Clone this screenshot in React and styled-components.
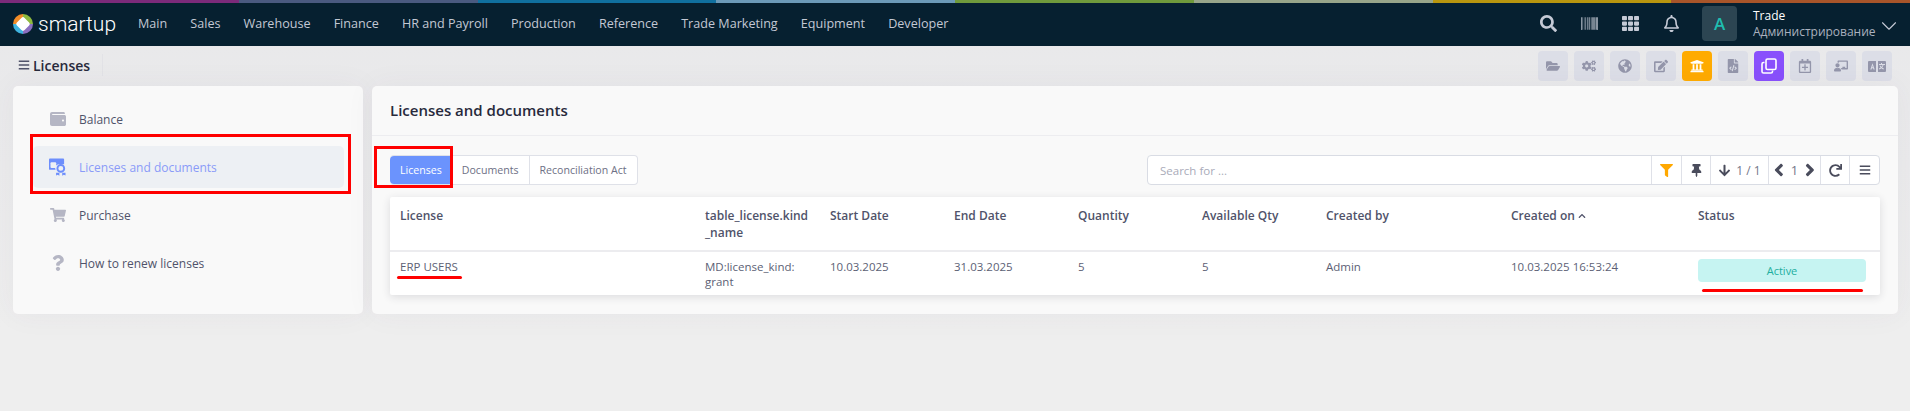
import React from 'react';
import styled, { createGlobalStyle } from 'styled-components';
import {
  FaSearch, FaBarcode, FaTh, FaRegBell, FaFolderOpen, FaCogs, FaGlobeAmericas, FaEdit,
  FaUniversity, FaFileCode, FaRegCalendarPlus, FaChalkboardTeacher,
  FaWallet, FaShoppingCart, FaQuestion, FaFilter, FaThumbtack, FaArrowDown, FaRedo, FaBars,
  FaAngleLeft, FaAngleRight, FaChevronUp,
} from 'react-icons/fa';
import { FiChevronDown } from 'react-icons/fi';

const GlobalStyle = createGlobalStyle`
  html, body { margin: 0; padding: 0; }
  body {
    width: 1910px;
    height: 411px;
    overflow: hidden;
    background: linear-gradient(#e8e8ea, #eeeeee 80%);
    font-family: "Open Sans", "Liberation Sans", sans-serif;
    color: #3f4254;
  }
`;

const Page = styled.div`
  position: relative;
  width: 1910px;
  height: 411px;
`;

const Strip = styled.div`
  display: flex;
  height: 3px;
`;

const StripPart = styled.div`
  flex: 1;
  background: ${({ $color }) => $color};
`;

const TopBar = styled.header`
  display: flex;
  align-items: center;
  box-sizing: border-box;
  height: 43px;
  background: #062030;
  padding: 0 0 2px 13px;
`;

const Logo = styled.div`
  display: flex;
  align-items: center;
  gap: 5px;
  width: 125px;
  color: #fff;
  font-family: Roboto, "Open Sans", sans-serif;
  font-size: 21px;
  font-weight: 300;
`;

const Nav = styled.nav`
  display: flex;
  gap: 23.1px;
  flex: 1;
`;

const NavItem = styled.span`
  font-size: 12.6px;
  color: #c3c8d4;
  white-space: nowrap;
`;

const TopIcons = styled.div`
  display: flex;
  align-items: center;
  color: #c5cad6;
`;

const TopIcon = styled.span`
  display: flex;
  justify-content: center;
  width: 41px;
  font-size: 17px;
`;

const Avatar = styled.div`
  display: flex;
  align-items: center;
  justify-content: center;
  width: 35px;
  height: 35px;
  margin: 0 16px 0 10px;
  border-radius: 4px;
  background: #2c4552;
  color: #1fbdb0;
  font-size: 17px;
  font-weight: 600;
`;

const UserBox = styled.div`
  position: relative;
  width: 157px;
  font-size: 12px;
  line-height: 16px;
`;

const UserName = styled.div`
  color: #fff;
  font-weight: 500;
`;

const UserRole = styled.div`
  color: #aab1bf;
`;

const UserChevron = styled(FiChevronDown)`
  position: absolute;
  right: 8px;
  top: 5px;
  width: 26px;
  height: 26px;
  stroke-width: 1;
  color: #c5cad6;
`;

const SubHeader = styled.div`
  display: flex;
  align-items: center;
  height: 40px;
  padding-left: 18px;
`;

const PageTitle = styled.h1`
  display: flex;
  align-items: center;
  gap: 3px;
  width: 84px;
  height: 22px;
  margin: -2px 0 0;
  font-size: 14px;
  font-weight: 600;
  color: #282a3c;
  border-right: 1px solid #e2e2e6;
`;

const Actions = styled.div`
  display: flex;
  gap: 6px;
  margin-left: auto;
  margin-right: 18px;
`;

const ActionButton = styled.span`
  display: flex;
  align-items: center;
  justify-content: center;
  width: 30px;
  height: 30px;
  border-radius: 4px;
  font-size: 14px;
  background: ${({ $bg }) => $bg || '#dcdee7'};
  color: ${({ $bg }) => ($bg ? '#fff' : '#9496ab')};
`;

const Content = styled.main`
  display: grid;
  grid-template-columns: 350px 1526px;
  gap: 9px;
  padding: 0 12px 0 13px;
`;

const Card = styled.section`
  height: 228px;
  background: #f9f9f9;
  border-radius: 5px;
  box-shadow: 0 0 30px rgba(82, 63, 105, 0.05);
`;

const SideList = styled.div`
  display: flex;
  flex-direction: column;
  padding: 12px 19px 0 20px;
`;

const SideItem = styled.div`
  display: flex;
  align-items: center;
  gap: 13px;
  height: 42px;
  margin-bottom: 6px;
  padding-left: 16px;
  border-radius: 5px;
  font-size: 12px;
  background: ${({ $active }) => ($active ? '#edf0f4' : 'transparent')};
  color: ${({ $active }) => ($active ? '#8a9bf8' : '#50536a')};
`;

const SideIcon = styled.span`
  display: flex;
  justify-content: center;
  width: 17px;
  font-size: 16px;
  color: ${({ $active }) => ($active ? '#6d8efc' : '#b5b6c4')};
`;

const CardHead = styled.div`
  display: flex;
  align-items: center;
  box-sizing: border-box;
  height: 50px;
  padding: 0 0 2px 18px;
  border-bottom: 1px solid #ededf0;
`;

const CardTitle = styled.h2`
  margin: 0;
  font-size: 15px;
  font-weight: 600;
  color: #282a3c;
`;

const CardBody = styled.div`
  padding: 19px 18px 0;
`;

const Controls = styled.div`
  display: flex;
  align-items: stretch;
  justify-content: space-between;
  height: 30px;
  margin-bottom: 12px;
`;

const Tabs = styled.div`
  display: flex;
  background: #fff;
  border: 1px solid #dfe1e8;
  border-left: 0;
  border-radius: 4px;
`;

const Tab = styled.span`
  display: flex;
  align-items: center;
  padding: 0 10px;
  font-size: 10.6px;
  color: ${({ $active }) => ($active ? '#fff' : '#6e7085')};
  background: ${({ $active }) => ($active ? '#6b93fd' : 'transparent')};
  border-radius: ${({ $active }) => ($active ? '4px 0 0 4px' : '0')};
  border-left: ${({ $divider }) => ($divider ? '1px solid #dfe1e8' : '0')};
`;

const SearchBar = styled.div`
  display: flex;
  box-sizing: border-box;
  width: 733px;
  background: #fff;
  border: 1px solid #d9dce4;
  border-radius: 4px;
`;

const SearchText = styled.div`
  flex: 1;
  display: flex;
  align-items: center;
  padding-left: 12px;
  font-size: 11.5px;
  color: #a9abb9;
`;

const ToolCell = styled.span`
  display: flex;
  align-items: center;
  justify-content: center;
  box-sizing: border-box;
  gap: ${({ $gap }) => $gap || 0}px;
  width: ${({ $w }) => $w}px;
  border-left: 1px solid #dfe1e8;
  font-size: ${({ $size }) => $size || 13}px;
  white-space: nowrap;
  color: ${({ $color }) => $color || '#4a4c5c'};
`;

const Muted = styled.span`
  color: #75778a;
  font-size: ${({ $size }) => $size || 12}px;
`;

const Table = styled.div`
  background: #fff;
  box-shadow: 0 2px 8px rgba(40, 42, 60, 0.14);
  border-radius: 2px;
`;

const Row = styled.div`
  display: grid;
  grid-template-columns: 305px 125px 124px 124px 124px 124px 185px 187px 182px;
  box-sizing: border-box;
  padding: ${({ $head }) => ($head ? '10px' : '7px')} 0 0 10px;
  height: ${({ $head }) => ($head ? '55px' : '43px')};
  border-bottom: ${({ $head }) => ($head ? '2px solid #ececef' : '0')};
`;

const HeadCell = styled.div`
  font-size: 12px;
  font-weight: 600;
  line-height: 17px;
  color: #50536a;
  padding-right: 12px;
  overflow-wrap: anywhere;
`;

const Cell = styled.div`
  font-size: 11.5px;
  line-height: 15px;
  color: #5c5f75;
`;

const SortMark = styled(FaChevronUp)`
  width: 8px;
  height: 8px;
  margin-left: 3px;
  vertical-align: 0;
`;

const StatusPill = styled.div`
  display: flex;
  align-items: center;
  justify-content: center;
  width: 168px;
  height: 23px;
  border-radius: 4px;
  background: #c6f4f2;
  color: #22ae9f;
  font-size: 11px;
`;

const RedBox = styled.div`
  position: absolute;
  left: ${({ $x }) => $x}px;
  top: ${({ $y }) => $y}px;
  width: ${({ $w }) => $w}px;
  height: ${({ $h }) => $h}px;
  box-sizing: border-box;
  border: 3px solid #f00;
  pointer-events: none;
`;

const RedLine = styled.div`
  position: absolute;
  left: ${({ $x }) => $x}px;
  top: ${({ $y }) => $y}px;
  width: ${({ $w }) => $w}px;
  height: 3px;
  border-radius: 1.5px;
  background: #f00;
`;

const stripColors = ['#7c2a7a', '#4a5a80', '#10709f', '#6c9ab8', '#6f9a3c', '#97a58a', '#b8960f', '#a8552a'];
const navItems = ['Main', 'Sales', 'Warehouse', 'Finance', 'HR and Payroll', 'Production', 'Reference', 'Trade Marketing', 'Equipment', 'Developer'];
const columns = ['License', 'table_license.kind _name', 'Start Date', 'End Date', 'Quantity', 'Available Qty', 'Created by', 'Created on', 'Status'];

function CopyIcon() {
  return (
    <svg width="16" height="16" viewBox="0 0 16 16" fill="none" stroke="currentColor" strokeWidth="1.6">
      <rect x="5" y="1" width="10" height="10.5" rx="1.5" />
      <path d="M3.5 4.5H2.5A1.5 1.5 0 0 0 1 6v7.5A1.5 1.5 0 0 0 2.5 15H10a1.5 1.5 0 0 0 1.5-1.5v-1" />
    </svg>
  );
}

function TranslateIcon() {
  return (
    <svg width="18" height="11" viewBox="0 0 18 11" fill="currentColor">
      <path fillRule="evenodd" d="M1 0h7v11H1a1 1 0 0 1-1-1V1a1 1 0 0 1 1-1zm3.5 2.2L2.3 8.5h1.2l.4-1.2h1.2l.4 1.2h1.2L4.5 2.2zm0 2.4l.35 1.6h-.7z" />
      <path fillRule="evenodd" d="M10 0h7a1 1 0 0 1 1 1v9a1 1 0 0 1-1 1h-7zm3 2v1h-2v1h3.6c-.2.8-.6 1.5-1.1 2-.4-.4-.7-.8-.9-1.2h-1c.2.6.6 1.2 1.1 1.8-.5.4-1.1.7-1.8.9l.4.9c.8-.3 1.5-.7 2.1-1.2.6.5 1.3.9 2.1 1.2l.4-.9c-.7-.2-1.3-.5-1.8-.9.7-.8 1.2-1.7 1.4-2.6H17V3h-3V2z" />
    </svg>
  );
}

function LicenseIcon() {
  return (
    <svg width="18" height="20" viewBox="0 0 18 20" fill="#6d8efc">
      <path d="M1 1h14a1 1 0 0 1 1 1v5h-6a4 4 0 0 0-3 6H1a1 1 0 0 1-1-1V2a1 1 0 0 1 1-1z" />
      <rect x="1.6" y="5" width="6" height="6" rx="1" fill="#edf0f4" />
      <circle cx="12.5" cy="11.5" r="3.6" fill="#edf0f4" stroke="#6d8efc" strokeWidth="2" />
      <path d="M7.5 16l3.5.2 0 3-1.7-1L7.5 19zM17.5 16l-3.5.2 0 3 1.7-1L17.5 19z" />
    </svg>
  );
}

function LogoMark() {
  return (
    <svg width="20" height="20" viewBox="0 0 22 22">
      <path d="M11 0A11 11 0 0 0 0 11h5l6-6z" fill="#f28c28" />
      <path d="M11 0a11 11 0 0 1 11 11h-5l-6-6z" fill="#8fb93e" />
      <path d="M22 11a11 11 0 0 1-11 11v-5l6-6z" fill="#8a6fc0" />
      <path d="M11 22A11 11 0 0 1 0 11h5l6 6z" fill="#3fb4e0" />
      <rect x="5" y="5" width="12" height="12" rx="2.5" transform="rotate(45 11 11)" fill="#fff" />
    </svg>
  );
}

const actions = [
  { icon: <FaFolderOpen /> },
  { icon: <FaCogs /> },
  { icon: <FaGlobeAmericas /> },
  { icon: <FaEdit /> },
  { icon: <FaUniversity />, bg: '#ffab00' },
  { icon: <FaFileCode /> },
  { icon: <CopyIcon />, bg: '#8950fc' },
  { icon: <FaRegCalendarPlus /> },
  { icon: <FaChalkboardTeacher /> },
  { icon: <TranslateIcon /> },
];
const sideItems = [
  { label: 'Balance', icon: <FaWallet /> },
  { label: 'Licenses and documents', icon: <LicenseIcon />, active: true },
  { label: 'Purchase', icon: <FaShoppingCart /> },
  { label: 'How to renew licenses', icon: <FaQuestion /> },
];

export default function App() {
  return (
    <Page>
      <GlobalStyle />
      <Strip>
        {stripColors.map((color) => <StripPart key={color} $color={color} />)}
      </Strip>
      <TopBar>
        <Logo><LogoMark />smartup</Logo>
        <Nav>
          {navItems.map((item) => <NavItem key={item}>{item}</NavItem>)}
        </Nav>
        <TopIcons>
          <TopIcon><FaSearch /></TopIcon>
          <TopIcon><FaBarcode /></TopIcon>
          <TopIcon><FaTh /></TopIcon>
          <TopIcon><FaRegBell /></TopIcon>
        </TopIcons>
        <Avatar>A</Avatar>
        <UserBox>
          <UserName>Trade</UserName>
          <UserRole>Администрирование</UserRole>
          <UserChevron />
        </UserBox>
      </TopBar>
      <SubHeader>
        <PageTitle><FaBars size={12} color="#50536a" />Licenses</PageTitle>
        <Actions>
          {actions.map((action, i) => (
            <ActionButton key={i} $bg={action.bg}>{action.icon}</ActionButton>
          ))}
        </Actions>
      </SubHeader>
      <Content>
        <Card>
          <SideList>
            {sideItems.map((item) => (
              <SideItem key={item.label} $active={item.active}>
                <SideIcon $active={item.active}>{item.icon}</SideIcon>
                {item.label}
              </SideItem>
            ))}
          </SideList>
        </Card>
        <Card>
          <CardHead><CardTitle>Licenses and documents</CardTitle></CardHead>
          <CardBody>
            <Controls>
              <Tabs>
                <Tab $active>Licenses</Tab>
                <Tab>Documents</Tab>
                <Tab $divider>Reconciliation Act</Tab>
              </Tabs>
              <SearchBar>
                <SearchText>Search for ...</SearchText>
                <ToolCell $w={30} $color="#ffa800"><FaFilter /></ToolCell>
                <ToolCell $w={29}><FaThumbtack /></ToolCell>
                <ToolCell $w={58} $gap={5}><FaArrowDown /><Muted>1 / 1</Muted></ToolCell>
                <ToolCell $w={52} $gap={2}><FaAngleLeft size={20} /><Muted $size={13}>1</Muted><FaAngleRight size={20} /></ToolCell>
                <ToolCell $w={29}><FaRedo /></ToolCell>
                <ToolCell $w={30} $size={12}><FaBars /></ToolCell>
              </SearchBar>
            </Controls>
            <Table>
              <Row $head>
                {columns.map((column) => (
                  <HeadCell key={column}>
                    {column}
                    {column === 'Created on' && <SortMark />}
                  </HeadCell>
                ))}
              </Row>
              <Row>
                <Cell>ERP USERS</Cell>
                <Cell>MD:license_kind:<br />grant</Cell>
                <Cell>10.03.2025</Cell>
                <Cell>31.03.2025</Cell>
                <Cell>5</Cell>
                <Cell>5</Cell>
                <Cell>Admin</Cell>
                <Cell>10.03.2025 16:53:24</Cell>
                <Cell><StatusPill>Active</StatusPill></Cell>
              </Row>
            </Table>
          </CardBody>
        </Card>
      </Content>
      <RedBox $x={30} $y={134} $w={321} $h={60} />
      <RedBox $x={374} $y={146} $w={79} $h={42} />
      <RedLine $x={397} $y={276} $w={65} />
      <RedLine $x={1702} $y={289} $w={161} />
    </Page>
  );
}
